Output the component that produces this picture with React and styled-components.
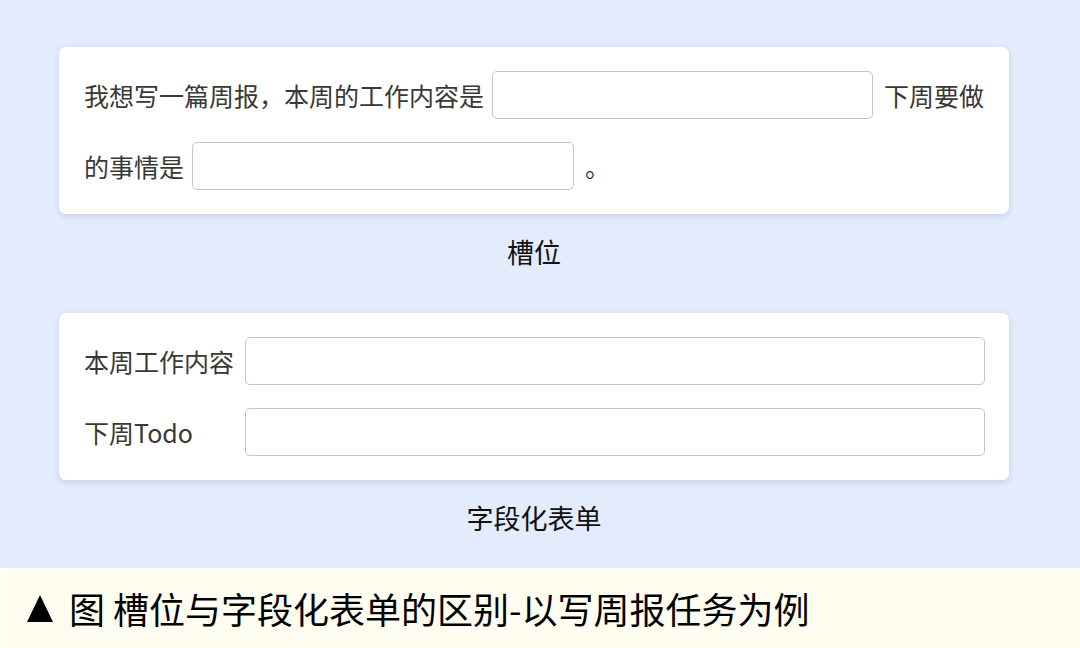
import styled, { createGlobalStyle } from "styled-components";

const GlobalStyle = createGlobalStyle`
  html, body {
    margin: 0;
    padding: 0;
    background: #e3ecfd;
  }
  body {
    font-family: "Noto Sans CJK SC", "Noto Sans", sans-serif;
  }
`;

const Page = styled.div`
  width: 1080px;
  height: 648px;
  display: flex;
  flex-direction: column;
  background: #e3ecfd;
  overflow: hidden;
`;

const Main = styled.main`
  flex: 1;
  display: flex;
  flex-direction: column;
  padding: 47px 71px 12px 59px;
`;

const Card = styled.div`
  background: #ffffff;
  border-radius: 7px;
  box-shadow: 0 2px 6px rgba(40, 60, 110, 0.16);
  height: 167px;
  box-sizing: border-box;
  margin-top: ${(p) => p.$offset || 0}px;
`;

const SlotCard = styled(Card)`
  padding: 12px 25px;
`;

const Line = styled.div`
  display: flex;
  align-items: center;
  height: 71px;
  font-size: 25px;
  color: #383838;
  white-space: nowrap;
`;

const Field = styled.div`
  box-sizing: border-box;
  width: ${(p) => p.$width || 382}px;
  height: 48px;
  margin: 0 11px 0 8px;
  border: 1px solid #c6c6c6;
  border-radius: 5px;
  background: #ffffff;
`;

const FormCard = styled(Card)`
  padding: 24px 24px 24px 25px;
  display: grid;
  grid-template-columns: 161px 1fr;
  row-gap: 23px;
  align-items: center;
`;

const Label = styled.span`
  font-size: 25px;
  color: #383838;
`;

const FormField = styled(Field)`
  width: auto;
  margin: 0;
`;

const Caption = styled.div`
  height: 76px;
  line-height: 76px;
  text-align: center;
  font-size: 27px;
  font-weight: 400;
  color: #111111;
`;

const Footer = styled.footer`
  height: 80px;
  display: flex;
  align-items: center;
  padding-left: 27px;
  background: #fffdf0;
  border-left: 2px solid #fffff8;
  font-size: 36px;
  font-weight: 400;
  color: #000000;
  white-space: pre;
`;

const Triangle = styled.span`
  width: 0;
  height: 0;
  border-left: 13px solid transparent;
  border-right: 13px solid transparent;
  border-bottom: 27px solid #000000;
  margin: 0 16px 0 -2px;
`;

export default function App() {
  return (
    <Page>
      <GlobalStyle />
      <Main>
        <SlotCard>
          <Line>
            我想写一篇周报，本周的工作内容是
            <Field />
            下周要做
          </Line>
          <Line>
            的事情是
            <Field />
            。
          </Line>
        </SlotCard>
        <Caption>槽位</Caption>
        <FormCard $offset={23}>
          <Label>本周工作内容</Label>
          <FormField />
          <Label>下周Todo</Label>
          <FormField />
        </FormCard>
        <Caption>字段化表单</Caption>
      </Main>
      <Footer>
        <Triangle />
        图 槽位与字段化表单的区别-以写周报任务为例
      </Footer>
    </Page>
  );
}
